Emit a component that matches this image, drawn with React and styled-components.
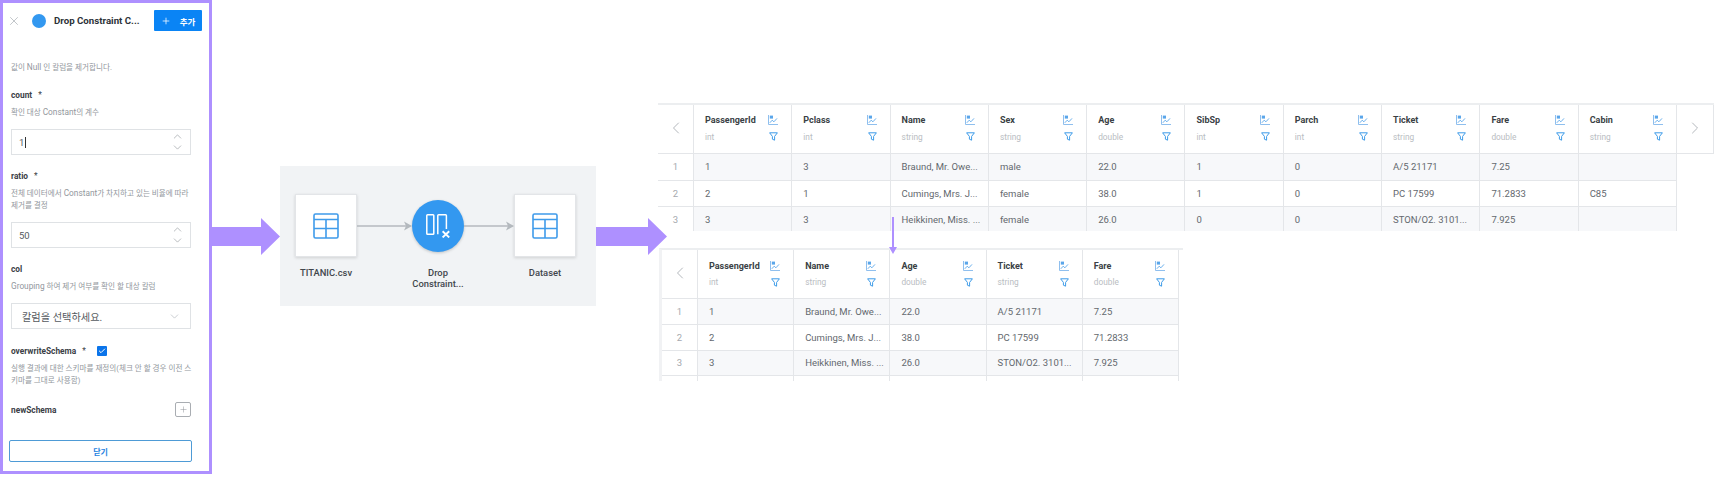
import React from "react";
import styled, { createGlobalStyle } from "styled-components";
import { X, Plus, ChevronUp, ChevronDown, ChevronLeft, ChevronRight, Check } from "lucide-react";

const Global = createGlobalStyle`
  html, body { margin: 0; padding: 0; background: #fff; overflow: hidden; }
  body { font-family: Roboto, "Noto Sans CJK KR", sans-serif; }
  * { box-sizing: border-box; }
`;

const Page = styled.div`
  display: flex;
  align-items: flex-start;
  width: 1714px;
  height: 479px;
  overflow: hidden;
`;

/* ---------- left panel ---------- */
const Panel = styled.aside`
  width: 212px;
  height: 474px;
  flex: none;
  border: 3px solid #ae90ff;
  background: #fff;
  display: flex;
  flex-direction: column;
  padding: 0 7px 0 8px;
  font-family: Roboto, "Noto Sans CJK KR", sans-serif;
`;
const PanelHead = styled.div`
  display: flex;
  align-items: center;
  height: 21px;
  margin-top: 7px;
`;
const CloseBtn = styled.span`
  display: flex;
  color: #a8adb3;
  width: 24px;
  margin-left: -4px;
`;
const Dot = styled.span`
  width: 14px;
  height: 14px;
  border-radius: 50%;
  background: #3398f0;
  margin-left: 1px;
  margin-right: 8px;
  flex: none;
`;
const PanelTitle = styled.span`
  font-size: 9.7px;
  font-weight: 700;
  color: #2c3138;
  white-space: nowrap;
`;
const AddBtn = styled.button`
  width: 48px;
  height: 21px;
  margin-left: auto;
  border: 0;
  border-radius: 1px;
  background: #0a84f5;
  color: #fff;
  font: 700 8.5px Roboto, "Noto Sans CJK KR", sans-serif;
  display: flex;
  align-items: center;
  justify-content: center;
  gap: 9px;
  padding: 0;
`;
const Help = styled.p`
  margin: ${(p) => p.$m || "0"};
  max-width: 181px;
  font-size: 7.6px;
  line-height: 12px;
  color: #92979d;
`;
const Latin = styled.span`
  font-size: 8.3px;
  line-height: 0;
`;
const FieldLabel = styled.div`
  font-size: 8.3px;
  font-weight: 700;
  color: #3b4046;
  line-height: 12px;
  width: 180px;
  margin-top: ${(p) => p.$mt || 0}px;
  display: flex;
  align-items: center;
  justify-content: ${(p) => (p.$between ? "space-between" : "flex-start")};
`;
const Star = styled.span`
  margin-left: 6px;
  font-weight: 400;
`;
const Field = styled.div`
  height: 26px;
  width: 180px;
  flex: none;
  margin-top: 10px;
  border: 1px solid #dfe2e5;
  display: flex;
  align-items: center;
  justify-content: space-between;
  padding: 0 6px 0 ${(p) => p.$pl || 7}px;
  font-size: ${(p) => p.$fs || 9.5}px;
  color: #555a60;
`;
const Caret = styled.span`
  display: inline-block;
  width: 1px;
  height: 11px;
  background: #333;
  margin-left: 1px;
  vertical-align: -2px;
`;
const Spin = styled.span`
  display: flex;
  flex-direction: column;
  color: #8a8f95;
  & > svg + svg { margin-top: -2px; }
`;
const SelectCaret = styled(ChevronDown)`
  margin-right: 3px;
  color: #a8adb3;
`;
const CheckBox = styled.span`
  width: 10px;
  height: 10px;
  border-radius: 1px;
  background: #0a74ea;
  color: #fff;
  margin-left: 11px;
  display: flex;
  align-items: center;
  justify-content: center;
`;
const PlusBtn = styled.span`
  width: 16px;
  height: 15px;
  border: 1px solid #a9adb2;
  border-radius: 2px;
  color: #8a8f95;
  display: flex;
  align-items: center;
  justify-content: center;
`;
const CloseWide = styled.button`
  width: 183px;
  height: 22px;
  margin: auto 0 9px -2px;
  background: #fff;
  border: 1px solid #4e9bd6;
  border-radius: 2px;
  color: #1f83e0;
  font: 700 8px Roboto, "Noto Sans CJK KR", sans-serif;
`;

/* ---------- big arrows ---------- */
const BigArrow = styled.svg`
  flex: none;
  display: block;
  margin-top: 218px;
  position: relative;
  z-index: 2;
`;
const DownArrow = styled.svg`
  position: absolute;
  left: 231px;
  top: 217px;
  z-index: 3;
`;

/* ---------- diagram ---------- */
const Diagram = styled.section`
  width: 316px;
  height: 140px;
  flex: none;
  margin-top: 166px;
  background: #f1f3f5;
  display: flex;
  align-items: flex-start;
  padding: 28px 0 0 15px;
`;
const Node = styled.div`
  width: ${(p) => p.$w || 62}px;
  flex: none;
  display: flex;
  flex-direction: column;
  align-items: center;
`;
const NodeBox = styled.div`
  width: 62px;
  height: 63px;
  background: #fff;
  border: 1px solid #e3e5e8;
  box-shadow: 0 1px 3px rgba(0, 0, 0, 0.14);
  display: flex;
  align-items: center;
  justify-content: center;
`;
const NodeCircle = styled.div`
  width: 52px;
  height: 52px;
  margin: 6px 0 5px;
  border-radius: 50%;
  background: #3398f0;
  box-shadow: 0 1px 3px rgba(0, 0, 0, 0.2);
  display: flex;
  align-items: center;
  justify-content: center;
`;
const NodeLabel = styled.div`
  margin-top: 10px;
  font-size: 9.4px;
  font-weight: 500;
  line-height: 11px;
  color: #41464c;
  text-align: center;
  white-space: nowrap;
`;
const Link = styled.svg`
  flex: none;
  margin-top: 25px;
  display: block;
`;

/* ---------- tables ---------- */
const TablesCol = styled.div`
  position: relative;
  width: 1056px;
  height: 381px;
  margin-left: -9px;
  flex: none;
  padding-top: 103px;
`;
const TableClip = styled.div`
  overflow: hidden;
  height: ${(p) => p.$h}px;
  width: ${(p) => p.$w}px;
  margin-left: ${(p) => p.$ml || 0}px;
  margin-top: ${(p) => p.$mt || 0}px;
  border-top: 2px solid #eceef0;
  ${(p) => p.$boxed && "border-left: 3px solid #f1f2f4;"}
`;
const Grid = styled.div`
  display: grid;
  grid-template-columns: ${(p) => p.$cols};
  grid-template-rows: ${(p) => p.$head}px;
  grid-auto-rows: ${(p) => p.$row}px;
`;
const HeadCell = styled.div`
  border-right: 1px solid #e4e6e9;
  border-bottom: 1px solid #e4e6e9;
  display: grid;
  grid-template-columns: 1fr 12px;
  grid-template-rows: ${(p) => p.$gap}px ${(p) => p.$gap}px;
  padding: ${(p) => p.$pt}px 13px 0 11px;
  align-items: center;
  background: #fff;
`;
const ColName = styled.span`
  font-size: 9px;
  font-weight: 700;
  color: #3a3f45;
  white-space: nowrap;
`;
const ColType = styled.span`
  font-size: 8.3px;
  color: #b9bdc2;
  grid-row: 2;
`;
const IconSlot = styled.span`
  display: flex;
  justify-content: flex-end;
`;
const NavCell = styled.div`
  border-right: 1px solid #e4e6e9;
  border-bottom: 1px solid #e4e6e9;
  display: flex;
  align-items: center;
  justify-content: center;
  padding-bottom: 3px;
  color: #b4b8bd;
`;
const Cell = styled.div`
  border-right: 1px solid #e4e6e9;
  border-bottom: 1px solid #e4e6e9;
  background: ${(p) => (p.$alt ? "#f7f8fa" : "#fff")};
  font-size: 9.5px;
  color: #63686e;
  display: flex;
  align-items: center;
  padding: 0 0 0 11px;
  white-space: nowrap;
`;
const IndexCell = styled(Cell)`
  background: #fff;
  color: #a5a9ae;
  justify-content: center;
  padding: 0;
`;
const Blank = styled.div`
  background: #fff;
`;

const ChartIcon = () => (
  <svg width="10" height="10" viewBox="0 0 10 10" fill="none">
    <path d="M.5 0V9.5H10" stroke="#8fbfee" strokeWidth="1" />
    <path d="M1.8.6h3.2v3H1.8z" fill="#5aa6ea" />
    <path d="M1.8 7.8 4.2 5.2 5.9 6.8 9 3.4" stroke="#5aa6ea" strokeWidth=".9" />
  </svg>
);
const FunnelIcon = () => (
  <svg width="9" height="9" viewBox="0 0 9 9" fill="none">
    <path d="M.6.8h7.8L5.6 4.4v3.8L3.4 7.2V4.4z" stroke="#3d9be8" strokeWidth="1" strokeLinejoin="round" />
  </svg>
);
const TableIcon = () => (
  <svg width="26" height="26" viewBox="0 0 26 26" fill="none" stroke="#3f9bea" strokeWidth="1.6">
    <rect x="1" y="1" width="24" height="24" rx="1.5" />
    <path d="M1 6.5h24M1 15.5h24M13 6.5V25" />
  </svg>
);
const DropIcon = () => (
  <svg width="24" height="24" viewBox="0 0 24 24" fill="none" stroke="#fff" strokeWidth="1.5">
    <rect x=".8" y=".8" width="7" height="19.4" rx=".8" />
    <path d="M11.8 20.2V1.6a.8.8 0 0 1 .8-.8h7a.8.8 0 0 1 .8.8V15" />
    <path d="M16.6 17.2l6.6 6.2M23.2 17.2l-6.6 6.2" strokeWidth="1.9" />
  </svg>
);

const Arrow = ({ w }) => (
  <BigArrow width={w} height="37" viewBox={`0 0 ${w} 37`}>
    <path d={`M0 9H${w - 19}V0L${w} 18.5 ${w - 19} 37V28H0z`} fill="#ae90ff" />
  </BigArrow>
);

const Head = ({ name, type, gap, pt }) => (
  <HeadCell $gap={gap} $pt={pt}>
    <ColName>{name}</ColName>
    <IconSlot><ChartIcon /></IconSlot>
    <ColType>{type}</ColType>
    <IconSlot><FunnelIcon /></IconSlot>
  </HeadCell>
);

const columns1 = [
  ["PassengerId", "int", "1", "2", "3"],
  ["Pclass", "int", "3", "1", "3"],
  ["Name", "string", "Braund, Mr. Owe...", "Cumings, Mrs. J...", "Heikkinen, Miss. ..."],
  ["Sex", "string", "male", "female", "female"],
  ["Age", "double", "22.0", "38.0", "26.0"],
  ["SibSp", "int", "1", "1", "0"],
  ["Parch", "int", "0", "0", "0"],
  ["Ticket", "string", "A/5 21171", "PC 17599", "STON/O2. 3101..."],
  ["Fare", "double", "7.25", "71.2833", "7.925"],
  ["Cabin", "string", "", "C85", ""],
];
const columns2 = [columns1[0], columns1[2], columns1[4], columns1[7], columns1[8]];

const DataTable = ({ cols, template, rowH, rows, navRight, gap, pt }) => (
  <Grid $cols={template} $head={49} $row={rowH}>
    <NavCell><ChevronLeft size={20} strokeWidth={1.2} /></NavCell>
    {cols.map((c) => <Head key={c[0]} name={c[0]} type={c[1]} gap={gap} pt={pt} />)}
    {navRight && <NavCell><ChevronRight size={20} strokeWidth={1.2} /></NavCell>}
    {Array.from({ length: rows }).map((_, r) => (
      <React.Fragment key={r}>
        <IndexCell>{r < 3 ? r + 1 : ""}</IndexCell>
        {cols.map((c) => (
          <Cell key={c[0]} $alt={r % 2 === 0}>{r < 3 ? c[2 + r] : ""}</Cell>
        ))}
        {navRight && <Blank />}
      </React.Fragment>
    ))}
  </Grid>
);

const Spinner = () => (
  <Spin>
    <ChevronUp size={13} strokeWidth={1.1} />
    <ChevronDown size={13} strokeWidth={1.1} />
  </Spin>
);

export default function App() {
  return (
    <Page>
      <Global />
      <Panel>
        <PanelHead>
          <CloseBtn><X size={14} strokeWidth={1.2} /></CloseBtn>
          <Dot />
          <PanelTitle>Drop Constraint C...</PanelTitle>
          <AddBtn><Plus size={10} strokeWidth={1.8} />추가</AddBtn>
        </PanelHead>
        <Help $m="31px 0 0">값이 <Latin>Null</Latin> 인 칼럼을 제거합니다.</Help>
        <FieldLabel $mt={15}>count<Star>*</Star></FieldLabel>
        <Help $m="6px 0 0">확인 대상 <Latin>Constant</Latin>의 계수</Help>
        <Field>
          <span>1<Caret /></span>
          <Spinner />
        </Field>
        <FieldLabel $mt={15}>ratio<Star>*</Star></FieldLabel>
        <Help $m="6px 0 0">전체 데이터에서 <Latin>Constant</Latin>가 차지하고 있는 비율에 따라 제거를 결정</Help>
        <Field>
          <span>50</span>
          <Spinner />
        </Field>
        <FieldLabel $mt={15}>col</FieldLabel>
        <Help $m="6px 0 0"><Latin>Grouping</Latin> 하여 제거 여부를 확인 할 대상 칼럼</Help>
        <Field $fs={10.2} $pl={10}>
          <span>칼럼을 선택하세요.</span>
          <SelectCaret size={13} strokeWidth={1.1} />
        </Field>
        <FieldLabel $mt={16}>overwriteSchema<Star>*</Star><CheckBox><Check size={8} strokeWidth={3} /></CheckBox></FieldLabel>
        <Help $m="6px 0 0">실행 결과에 대한 스키마를 재정의(체크 안 할 경우 이전 스키마를 그대로 사용함)</Help>
        <FieldLabel $mt={15} $between>newSchema<PlusBtn><Plus size={9} strokeWidth={1.3} /></PlusBtn></FieldLabel>
        <CloseWide>닫기</CloseWide>
      </Panel>

      <Arrow w={68} />

      <Diagram>
        <Node>
          <NodeBox><TableIcon /></NodeBox>
          <NodeLabel>TITANIC.csv</NodeLabel>
        </Node>
        <Link width="55" height="14" viewBox="0 0 55 14">
          <path d="M0 7H51" stroke="#b4b9be" strokeWidth="1.5" />
          <path d="M47 2.5 55 7 47 11.5 49 7z" fill="#b4b9be" />
        </Link>
        <Node $w={52}>
          <NodeCircle><DropIcon /></NodeCircle>
          <NodeLabel>Drop<br />Constraint...</NodeLabel>
        </Node>
        <Link width="50" height="14" viewBox="0 0 50 14">
          <path d="M0 7H46" stroke="#b4b9be" strokeWidth="1.5" />
          <path d="M42 2.5 50 7 42 11.5 44 7z" fill="#b4b9be" />
        </Link>
        <Node>
          <NodeBox><TableIcon /></NodeBox>
          <NodeLabel>Dataset</NodeLabel>
        </Node>
      </Diagram>

      <Arrow w={71} />

      <TablesCol>
        <DownArrow width="8" height="37" viewBox="0 0 8 37">
          <path d="M3 0H5V30H8L4 37 0 30H3z" fill="#ae90ff" />
        </DownArrow>
        <TableClip $h={128} $w={1056}>
          <DataTable
            cols={columns1}
            template="36px repeat(10, 98.3px) 37px"
            rowH={26.5}
            rows={3}
            navRight
            gap={17}
            pt={6}
          />
        </TableClip>
        <TableClip $h={133} $w={524} $ml={1} $mt={17} $boxed>
          <DataTable
            cols={columns2}
            template="36px repeat(5, 96.2px)"
            rowH={25.8}
            rows={4}
            gap={16}
            pt={8}
          />
        </TableClip>
      </TablesCol>
    </Page>
  );
}
